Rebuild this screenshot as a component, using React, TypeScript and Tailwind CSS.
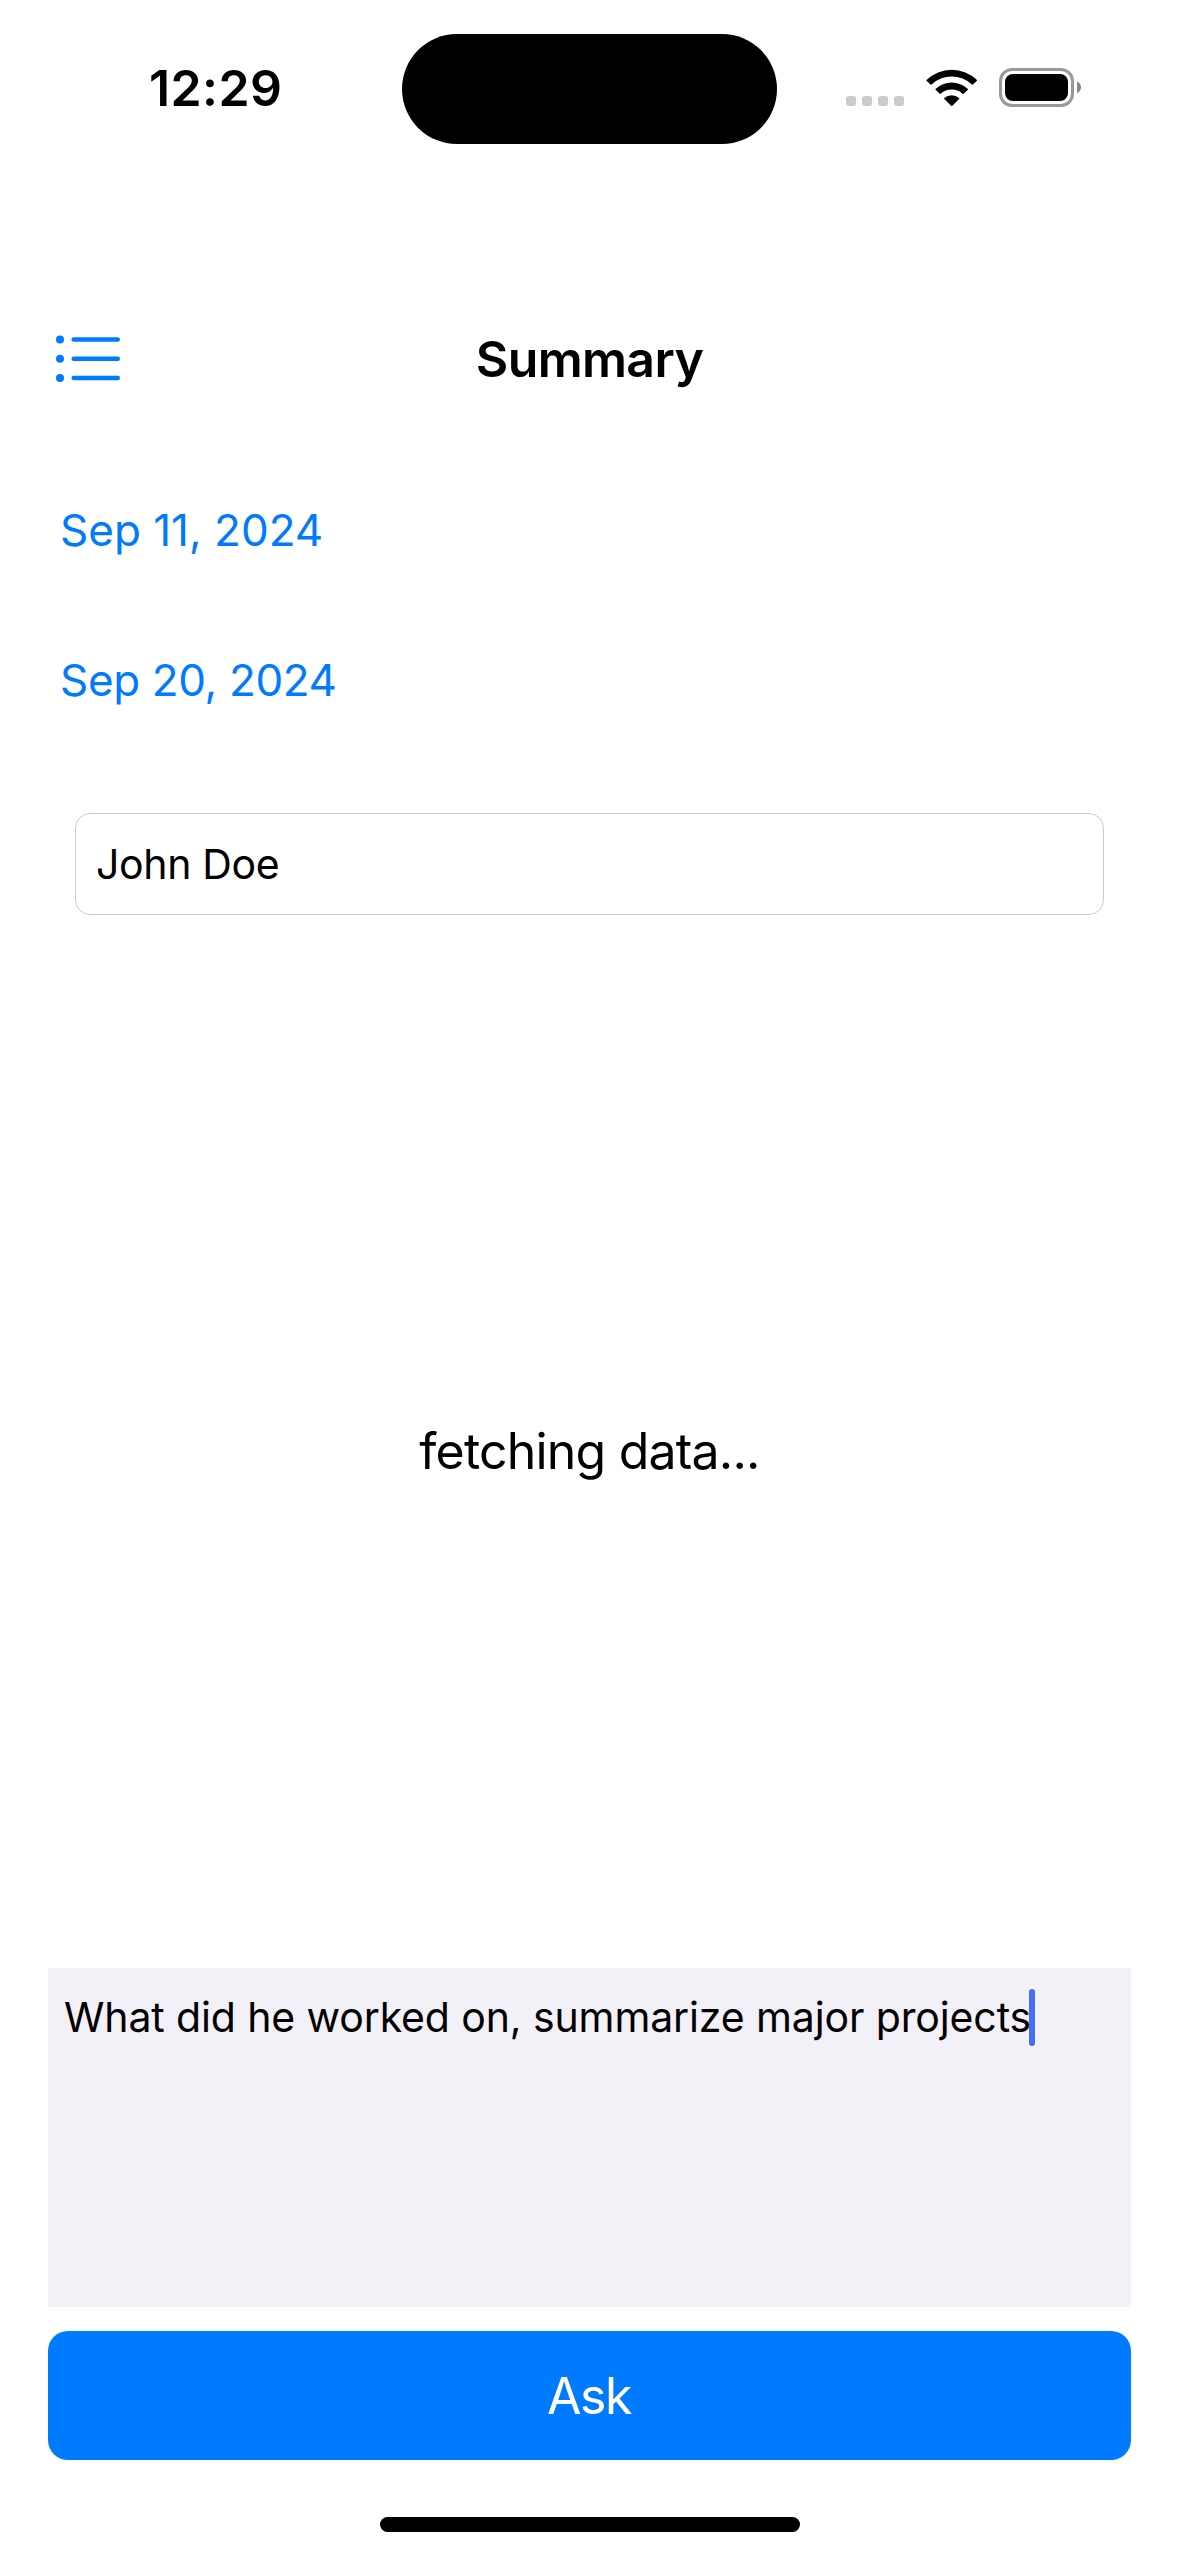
import type { ReactNode } from "react";

function StatusBar() {
  return (
    <header className="flex h-[178px] items-start">
      <div className="mt-[58px] w-[402px] pl-[149px] text-[50px] leading-[60px] font-semibold tracking-[0.4px]">12:29</div>
      <div className="mt-[34px] h-[110px] w-[375px] rounded-full bg-black" />
      <div className="mt-[68px] ml-[69px] flex h-[39px]">
        <div className="mt-[28px] flex gap-[6px]">
          {[0, 1, 2, 3].map((i) => (
            <span key={i} className="size-[10px] rounded-[3px] bg-[#cccccc]" />
          ))}
        </div>
        <svg className="ml-[22px] h-[39px] w-[52px]" viewBox="0 0 52 39">
          <path d="M.5 12A36.500 36.500 0 0 1 51 12Q51.200 12.300 50.900 12.700L46.900 16.600Q46.400 17 45.900 16.600A29.300 29.300 0 0 0 5.500 16.600Q5 17 4.500 16.600L.5 12.700Q.2 12.300 .5 12Z" />
          <path d="M9.500 20.900A23.700 23.700 0 0 1 41.900 20.900Q42.200 21.300 41.900 21.700L37.600 25.800Q37.100 26.100 36.600 25.700A16.500 16.500 0 0 0 14.800 25.700Q14.300 26.100 13.800 25.800L9.500 21.700Q9.200 21.300 9.500 20.900Z" />
          <path d="M18.300 30A11.500 11.500 0 0 1 33.100 30Q33.500 30.500 33.100 31L26.300 37.700Q25.700 38.200 25.100 37.700L18.300 31Q17.900 30.500 18.300 30Z" />
        </svg>
        <svg className="ml-[21px] h-[39px] w-[83px]" viewBox="0 0 83 39">
          <rect x="1.500" y="1.500" width="72" height="36" rx="11.500" fill="none" stroke="#999999" strokeWidth="3" />
          <rect x="6" y="6" width="63" height="27" rx="8" />
          <path d="M78 13.500Q82 15.500 82 19.300T78 25.200Z" fill="#888888" />
        </svg>
      </div>
    </header>
  );
}

function ListIcon() {
  return (
    <svg className="h-[48px] w-[68px]" viewBox="0 0 68 48" fill="#007aff" stroke="#007aff">
      {[4.500, 23.800, 43].map((y) => (
        <g key={y}>
          <circle cx="5" cy={y} r="4" stroke="none" />
          <path d={`M18.700 ${y}H62.800`} strokeWidth="4.400" strokeLinecap="round" />
        </g>
      ))}
    </svg>
  );
}

function DateButton({ children }: { children: ReactNode }) {
  return <button className="block text-left text-[44px] leading-[60px] text-[#007aff]">{children}</button>;
}

export default function App() {
  return (
    <div className="flex h-[2556px] w-[1179px] flex-col bg-white font-['Inter',sans-serif] text-black">
      <StatusBar />
      <nav className="mt-[151px] grid h-[60px] grid-cols-[1fr_auto_1fr] items-center px-[55px]">
        <button className="justify-self-start">
          <ListIcon />
        </button>
        <h1 className="text-[50px] leading-[60px] font-semibold tracking-[-0.65px]">Summary</h1>
      </nav>
      <div className="mt-[111px] flex flex-col items-start gap-[90px] pl-[60px]">
        <DateButton>Sep 11, 2024</DateButton>
        <DateButton>
          <span className="tracking-[-0.35px]">Sep 20, 2024</span>
        </DateButton>
      </div>
      <div className="mx-[75px] mt-[103px] flex h-[102px] items-center rounded-[15px] border border-[#cccccc] pt-[2px] pl-[20px] text-[41px] tracking-[-0.35px]">
        John Doe
      </div>
      <main className="flex h-[1053px] items-start justify-center pt-[506px] text-[50px] leading-[60px] tracking-[-0.8px]">
        fetching data...
      </main>
      <div className="mx-[48px] flex h-[339px] items-start bg-[#f2f1f7] pt-[21px] pl-[16px]">
        <span className="text-[41px] leading-[57px] tracking-[-0.12px] whitespace-nowrap">What did he worked on, summarize major projects</span>
        <span className="-ml-[2px] h-[57px] w-[6px] rounded-full bg-[#456ef0]" />
      </div>
      <button className="mx-[48px] mt-[24px] h-[129px] rounded-[20px] bg-[#007aff] text-[50px] leading-[60px] tracking-[-1.5px] text-white">
        <span className="-ml-[1px]">Ask</span>
      </button>
      <div className="mt-[57px] h-[15px] w-[420px] self-center rounded-full bg-black" />
    </div>
  );
}
